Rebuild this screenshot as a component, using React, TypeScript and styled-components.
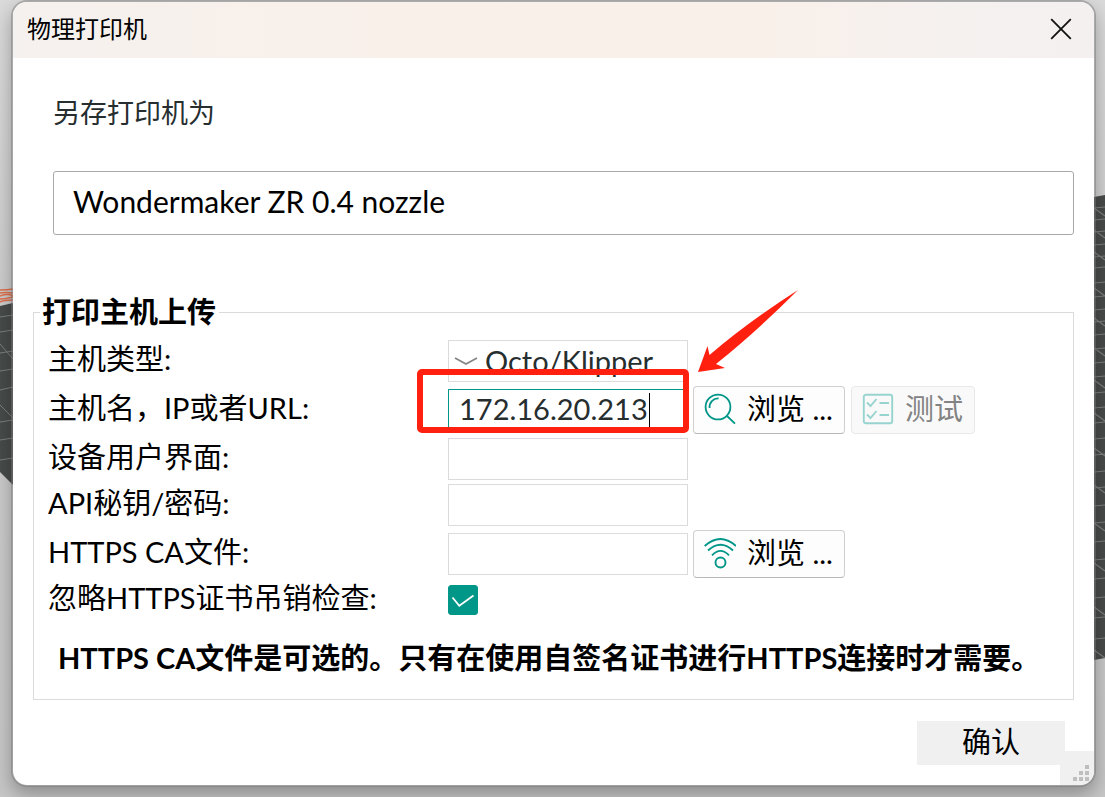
import React, { useState } from "react";
import styled, { createGlobalStyle, css } from "styled-components";

const TEAL = "#009688";
const RED = "#ff2010";

const GlobalStyle = createGlobalStyle`
  * { box-sizing: border-box; }
  body {
    margin: 0;
    background: #cfcfcf;
    color: #000;
    font-family: Lato, "Noto Sans CJK SC", sans-serif;
    font-size: 29px;
    line-height: 40px;
  }
  input, button, select { font: inherit; color: inherit; margin: 0; }
`;

const Page = styled.div`
  position: relative;
  min-height: 100vh;
  overflow: hidden;
  padding: 0 9px 10px 11px;
  background: linear-gradient(180deg, #dadada 0%, #cdcdcd 35%, #c6c6c6 100%);
`;

const SceneStrip = styled.svg<{ $side: "left" | "right" }>`
  position: absolute;
  top: 0;
  ${(p) => p.$side}: 0;
`;

const Dialog = styled.form`
  position: relative;
  border: 2px solid rgba(119, 119, 119, 0.47);
  border-radius: 16px;
  background: #fff;
  background-clip: padding-box;
  box-shadow: 0 8px 18px rgba(0, 0, 0, 0.28);
`;

const TitleBar = styled.header`
  display: flex;
  align-items: center;
  justify-content: space-between;
  height: 56px;
  padding: 0 20px 2px 14px;
  border-radius: 14px 14px 0 0;
  background: linear-gradient(90deg, #f5f1ee 0%, #f9f0ea 34%, #f9f0ea 70%, #f5f1ef 86%, #f4f0f0 100%);
`;

const Title = styled.h1`
  margin: 0;
  font-size: 24px;
  font-weight: 400;
`;

const CloseButton = styled.button`
  display: flex;
  padding: 0;
  border: 0;
  background: none;
`;

const Body = styled.main`
  padding: 35px 20px 20px;
`;

const NameBlock = styled.div`
  display: flex;
  flex-direction: column;
  gap: 38px;
  padding-left: 20px;
`;

const NameLabel = styled.label`
  font-size: 27px;
  color: #262e30;
`;

const NameInput = styled.input`
  width: 100%;
  height: 64px;
  padding: 0 19px 4px;
  border: 1px solid #a8a8a8;
  border-radius: 3px;
  background: #fff;
  font-size: 30px;
  outline: none;
`;

const Group = styled.fieldset`
  min-width: 0;
  margin: 57px 0 0;
  padding: 8px 14px 21px 6px;
  border: 1px solid #dbdbdb;
`;

const Legend = styled.legend`
  padding: 0 3px 0 2px;
  font-weight: 700;
`;

const Rows = styled.div`
  display: flex;
  flex-direction: column;
  gap: 4px;
  padding-left: 8px;
`;

const Row = styled.div<{ $short?: boolean }>`
  display: grid;
  grid-template-columns: 400px 240px 1fr;
  align-items: center;
  min-height: ${(p) => (p.$short ? 36 : 42)}px;
`;

const RowLabel = styled.label`
  padding-bottom: 4px;
  line-height: 32px;
`;

const fieldFrame = css`
  width: 100%;
  height: 42px;
  border: 1px solid #dbdbdb;
  border-radius: 0;
  background: #fff;
  outline: none;
`;

const FieldInput = styled.input`
  ${fieldFrame}
  padding: 0 10px;
`;

const SelectWrap = styled.div`
  position: relative;
`;

const Select = styled.select`
  ${fieldFrame}
  display: block;
  appearance: none;
  padding: 0 0 2px 36px;
  color: #262e30;
`;

const Chevron = styled.svg`
  position: absolute;
  left: 6px;
  top: 16px;
  pointer-events: none;
`;

const HostWrap = styled.div`
  position: relative;
`;

const HostFrame = styled.div`
  ${fieldFrame}
  display: flex;
  align-items: center;
  padding-left: 10px;
  border-color: ${TEAL};
`;

const HostInput = styled.input`
  field-sizing: content;
  padding: 0 1px 2px 0;
  border: 0;
  background: none;
  outline: none;
  color: #262e30;
  caret-color: transparent;
`;

const Caret = styled.span`
  width: 1px;
  height: 34px;
  background: #000;
`;

const Highlight = styled.div`
  position: absolute;
  inset: -20px -1px -2px -31px;
  border: 6px solid ${RED};
  border-radius: 5px;
  pointer-events: none;
`;

const Arrow = styled.svg`
  position: absolute;
  left: 250px;
  bottom: 58px;
  pointer-events: none;
`;

const Actions = styled.div`
  display: flex;
  gap: 6px;
  padding-left: 5px;
`;

const ActionButton = styled.button`
  display: flex;
  align-items: center;
  gap: 11px;
  height: 48px;
  padding: 0 11px 2px 10px;
  border: 1px solid #d0d0d0;
  border-bottom-color: #b8b8b8;
  border-radius: 4px;
  background: #fdfdfd;
  white-space: nowrap;
  &:disabled {
    border-color: #e8e8e8;
    background: #f9f9f9;
    color: #838383;
  }
`;

const CheckWrap = styled.div`
  position: relative;
  width: 30px;
  height: 30px;
  svg { position: absolute; inset: 0; pointer-events: none; }
`;

const CheckInput = styled.input`
  display: block;
  appearance: none;
  width: 30px;
  height: 30px;
  border: 1px solid ${TEAL};
  border-radius: 3px;
  &:checked { background: ${TEAL}; }
`;

const Note = styled.p`
  margin: 20px 0 0;
  padding-left: 18px;
  font-weight: 700;
`;

const Footer = styled.footer`
  position: relative;
  z-index: 1;
  display: flex;
  justify-content: flex-end;
  padding: 21px 9px 0 0;
`;

const ConfirmButton = styled.button`
  width: 148px;
  height: 44px;
  padding: 0 0 2px;
  border: 0;
  background: #f0f0f0;
`;

const Grip = styled.svg`
  position: absolute;
  right: 0;
  bottom: 0;
  background: #f0f0f0;
  border-bottom-right-radius: 14px;
`;

const bedRows = [208, 220, 232, 245, 257, 268, 283, 297, 310, 322, 335, 349, 363, 377, 393, 408, 423, 439, 455, 472, 488, 506, 523, 542, 560, 579, 598, 618, 639];
const bedDiagonals = [208, 230, 252, 288, 318, 348, 380, 413, 448, 485, 523, 563, 607, 650];

function LeftScene() {
  return (
    <SceneStrip $side="left" width="13" height="797" aria-hidden="true">
      <path d="M0 306 13 303V485L0 472Z" fill="#474b49" />
      <path
        d="M0 317 13 315M0 332l13-2M0 353l13-2M0 371l13-2M0 390l13-3M0 422l13-2M0 440l13-2M0 460l13-2M0 344l13 15M0 405l13 13"
        stroke="#7c807e"
        fill="none"
      />
      <path
        d="M0 290Q8 290 13 289M0 293Q5 292 13 293M0 296Q8 293 13 296M0 299Q6 299 13 297M0 302Q4 300 13 300"
        stroke="#e0704c"
        strokeWidth="1.6"
        fill="none"
      />
    </SceneStrip>
  );
}

function RightScene() {
  return (
    <SceneStrip $side="right" width="11" height="797" aria-hidden="true">
      <path d="M0 197 11 195V658L0 660Z" fill="#474b49" />
      <path
        d={bedRows.map((y) => `M0 ${y}l11-1`).join("") + bedDiagonals.map((y) => `M0 ${y}l11 8`).join("")}
        stroke="#7c807e"
        strokeWidth="1.2"
        fill="none"
      />
    </SceneStrip>
  );
}

function SearchIcon() {
  return (
    <svg width="32" height="32" viewBox="0 0 32 32" fill="none" stroke={TEAL} strokeWidth="1.8" aria-hidden="true">
      <circle cx="14" cy="14" r="12.4" />
      <path d="M5.6 15A8.6 8.6 0 0 1 14.6 5.4M23 23l8 7.6" />
    </svg>
  );
}

function ChecklistIcon() {
  return (
    <svg width="32" height="32" viewBox="0 0 32 32" fill="none" stroke="#98d4cf" strokeWidth="1.9" aria-hidden="true">
      <rect x="1.8" y="1.8" width="28.4" height="28.4" rx="2" />
      <path d="M5 9.5 8.5 13 14.5 6M17.5 10H27M5 21.5 8.5 25 14.5 18M17.5 22H27" />
    </svg>
  );
}

function SignalIcon() {
  return (
    <svg width="32" height="32" viewBox="0 0 32 32" fill="none" stroke={TEAL} strokeWidth="1.9" aria-hidden="true">
      <circle cx="16.500" cy="25.500" r="5" />
      <path d="M.7 9Q16.500-5 32 9" />
      <path d="M4 13.500Q16.500 2 29 13.500" />
      <path d="M8 18.300Q16.500 9.500 25 18.300" />
    </svg>
  );
}

export default function App() {
  const [name, setName] = useState("Wondermaker ZR 0.4 nozzle");
  const [host, setHost] = useState("172.16.20.213");
  const [ignore, setIgnore] = useState(true);

  return (
    <Page>
      <GlobalStyle />
      <LeftScene />
      <RightScene />
      <Dialog onSubmit={(e) => e.preventDefault()}>
        <TitleBar>
          <Title>物理打印机</Title>
          <CloseButton type="button" aria-label="关闭">
            <svg width="26" height="26" viewBox="0 0 26 26" stroke="#111" strokeWidth="1.8" aria-hidden="true">
              <path d="M3.2 3.2 22.8 22.8M22.8 3.2 3.2 22.8" />
            </svg>
          </CloseButton>
        </TitleBar>
        <Body>
          <NameBlock>
            <NameLabel htmlFor="name">另存打印机为</NameLabel>
            <NameInput id="name" value={name} onChange={(e) => setName(e.target.value)} />
          </NameBlock>
          <Group>
            <Legend>打印主机上传</Legend>
            <Rows>
              <Row>
                <RowLabel htmlFor="type">主机类型:</RowLabel>
                <SelectWrap>
                  <Select id="type">
                    <option>Octo/Klipper</option>
                  </Select>
                  <Chevron width="24" height="12" viewBox="0 0 24 12" fill="none" stroke="#858585" strokeWidth="1.8" aria-hidden="true">
                    <path d="M1 2 12 8 23 2" />
                  </Chevron>
                </SelectWrap>
              </Row>
              <Row>
                <RowLabel htmlFor="host">主机名，IP或者URL:</RowLabel>
                <HostWrap>
                  <HostFrame>
                    <HostInput id="host" value={host} onChange={(e) => setHost(e.target.value)} />
                    <Caret />
                  </HostFrame>
                  <Highlight />
                  <Arrow width="100" height="84" viewBox="0 0 100 84" fill={RED} aria-hidden="true">
                    <path d="M0 83 9.5 57 11.5 66Q50 33 100 1Q58 43 18 75L27 79Z" />
                  </Arrow>
                </HostWrap>
                <Actions>
                  <ActionButton type="button">
                    <SearchIcon />
                    浏览 ...
                  </ActionButton>
                  <ActionButton type="button" disabled>
                    <ChecklistIcon />
                    测试
                  </ActionButton>
                </Actions>
              </Row>
              <Row>
                <RowLabel htmlFor="ui">设备用户界面:</RowLabel>
                <FieldInput id="ui" />
              </Row>
              <Row>
                <RowLabel htmlFor="key">API秘钥/密码:</RowLabel>
                <FieldInput id="key" />
              </Row>
              <Row>
                <RowLabel htmlFor="ca">HTTPS CA文件:</RowLabel>
                <FieldInput id="ca" />
                <Actions>
                  <ActionButton type="button">
                    <SignalIcon />
                    浏览 ...
                  </ActionButton>
                </Actions>
              </Row>
              <Row $short>
                <RowLabel htmlFor="ignore">忽略HTTPS证书吊销检查:</RowLabel>
                <CheckWrap>
                  <CheckInput id="ignore" type="checkbox" checked={ignore} onChange={(e) => setIgnore(e.target.checked)} />
                  <svg width="30" height="30" viewBox="0 0 30 30" fill="none" stroke="#fff" strokeWidth="1.8" aria-hidden="true">
                    <path d="M4.5 12.5 11.3 20.7 25.5 10.5" />
                  </svg>
                </CheckWrap>
              </Row>
            </Rows>
            <Note>HTTPS CA文件是可选的。只有在使用自签名证书进行HTTPS连接时才需要。</Note>
          </Group>
          <Footer>
            <ConfirmButton type="submit">确认</ConfirmButton>
          </Footer>
        </Body>
        <Grip width="34" height="34" viewBox="0 0 34 34" aria-hidden="true">
          <path d="M25 14h4v4h-4zM19 20h4v4h-4zM25 20h4v4h-4zM13 26h4v4h-4zM19 26h4v4h-4zM25 26h4v4h-4z" fill="#bfbfbf" />
        </Grip>
      </Dialog>
    </Page>
  );
}
